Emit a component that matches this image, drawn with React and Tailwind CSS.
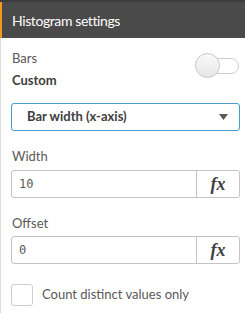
export default function App() {
  const font = { fontFamily: 'Lato, "Liberation Sans", sans-serif' };
  const mono = { fontFamily: '"DejaVu Sans Mono", monospace' };
  const serif = { fontFamily: '"Liberation Serif", serif' };
  return (
    <div className="w-[245px] h-[313px] bg-white overflow-hidden" style={font}>
      {/* header */}
      <div className="border-t-2 border-[#3c3c3c] bg-[#4a4a4a]">
        <div className="h-[36px] border-l-2 border-[#f39a1d] pl-[10px] flex items-center text-white text-[14px] tracking-[-0.4px]">
          Histogram settings
        </div>
      </div>

      <div className="border-l border-[#dcdcdc] h-full pl-[10px] pr-[5px]">
        {/* bars toggle */}
        <div className="flex items-start justify-between pt-[10px]">
          <div className="pl-[1px]">
            <div className="text-[13px] text-[#595959] leading-[20px]">Bars</div>
            <div className="text-[13px] font-bold text-[#404040] leading-[20px] mt-[2px]">Custom</div>
          </div>
          <div className="relative w-[44px] h-[26px] mt-[5px] mr-[1px]">
            <div className="absolute left-[10px] right-0 top-[5px] h-[16px] rounded-full border border-[#cfcfcf] bg-white" />
            <div className="absolute left-0 top-0 w-[25px] h-[25px] rounded-full border border-[#c8c8c8] bg-gradient-to-b from-[#fafafa] to-[#e6e6e6]" />
          </div>
        </div>

        {/* dropdown */}
        <div className="mt-[13px] h-[28px] border border-[#4a9bd0] rounded-[3px] flex items-center justify-between pl-[15px] pr-[11px]">
          <span className="text-[13px] font-bold text-[#404040]">Bar width (x-axis)</span>
          <svg width="9" height="6" viewBox="0 0 9 6">
            <path d="M0 0h9L4.5 6z" fill="#595959" />
          </svg>
        </div>

        {/* width */}
        <div className="mt-[16px] text-[13px] text-[#595959] leading-[18px] pl-[1px]">Width</div>
        <div className="mt-[5px] h-[28px] border border-[#c4c4c4] rounded-[3px] flex">
          <div className="flex-1 flex items-center pl-[7px] text-[12px] text-[#595959]" style={mono}>10</div>
          <div className="w-[43px] border-l border-[#c4c4c4] flex items-center justify-center text-[18px] font-bold italic text-[#404040]" style={serif}>fx</div>
        </div>

        {/* offset */}
        <div className="mt-[16px] text-[13px] text-[#595959] leading-[18px] pl-[1px]">Offset</div>
        <div className="mt-[4px] h-[28px] border border-[#c4c4c4] rounded-[3px] flex">
          <div className="flex-1 flex items-center pl-[7px] text-[12px] text-[#595959]" style={mono}>0</div>
          <div className="w-[43px] border-l border-[#c4c4c4] flex items-center justify-center text-[18px] font-bold italic text-[#404040]" style={serif}>fx</div>
        </div>

        {/* checkbox */}
        <div className="mt-[20px] flex items-center gap-[9px]">
          <div className="w-[22px] h-[22px] border border-[#cfcfcf] rounded-[3px] bg-white" />
          <span className="text-[13px] text-[#595959]">Count distinct values only</span>
        </div>
      </div>
    </div>
  );
}
